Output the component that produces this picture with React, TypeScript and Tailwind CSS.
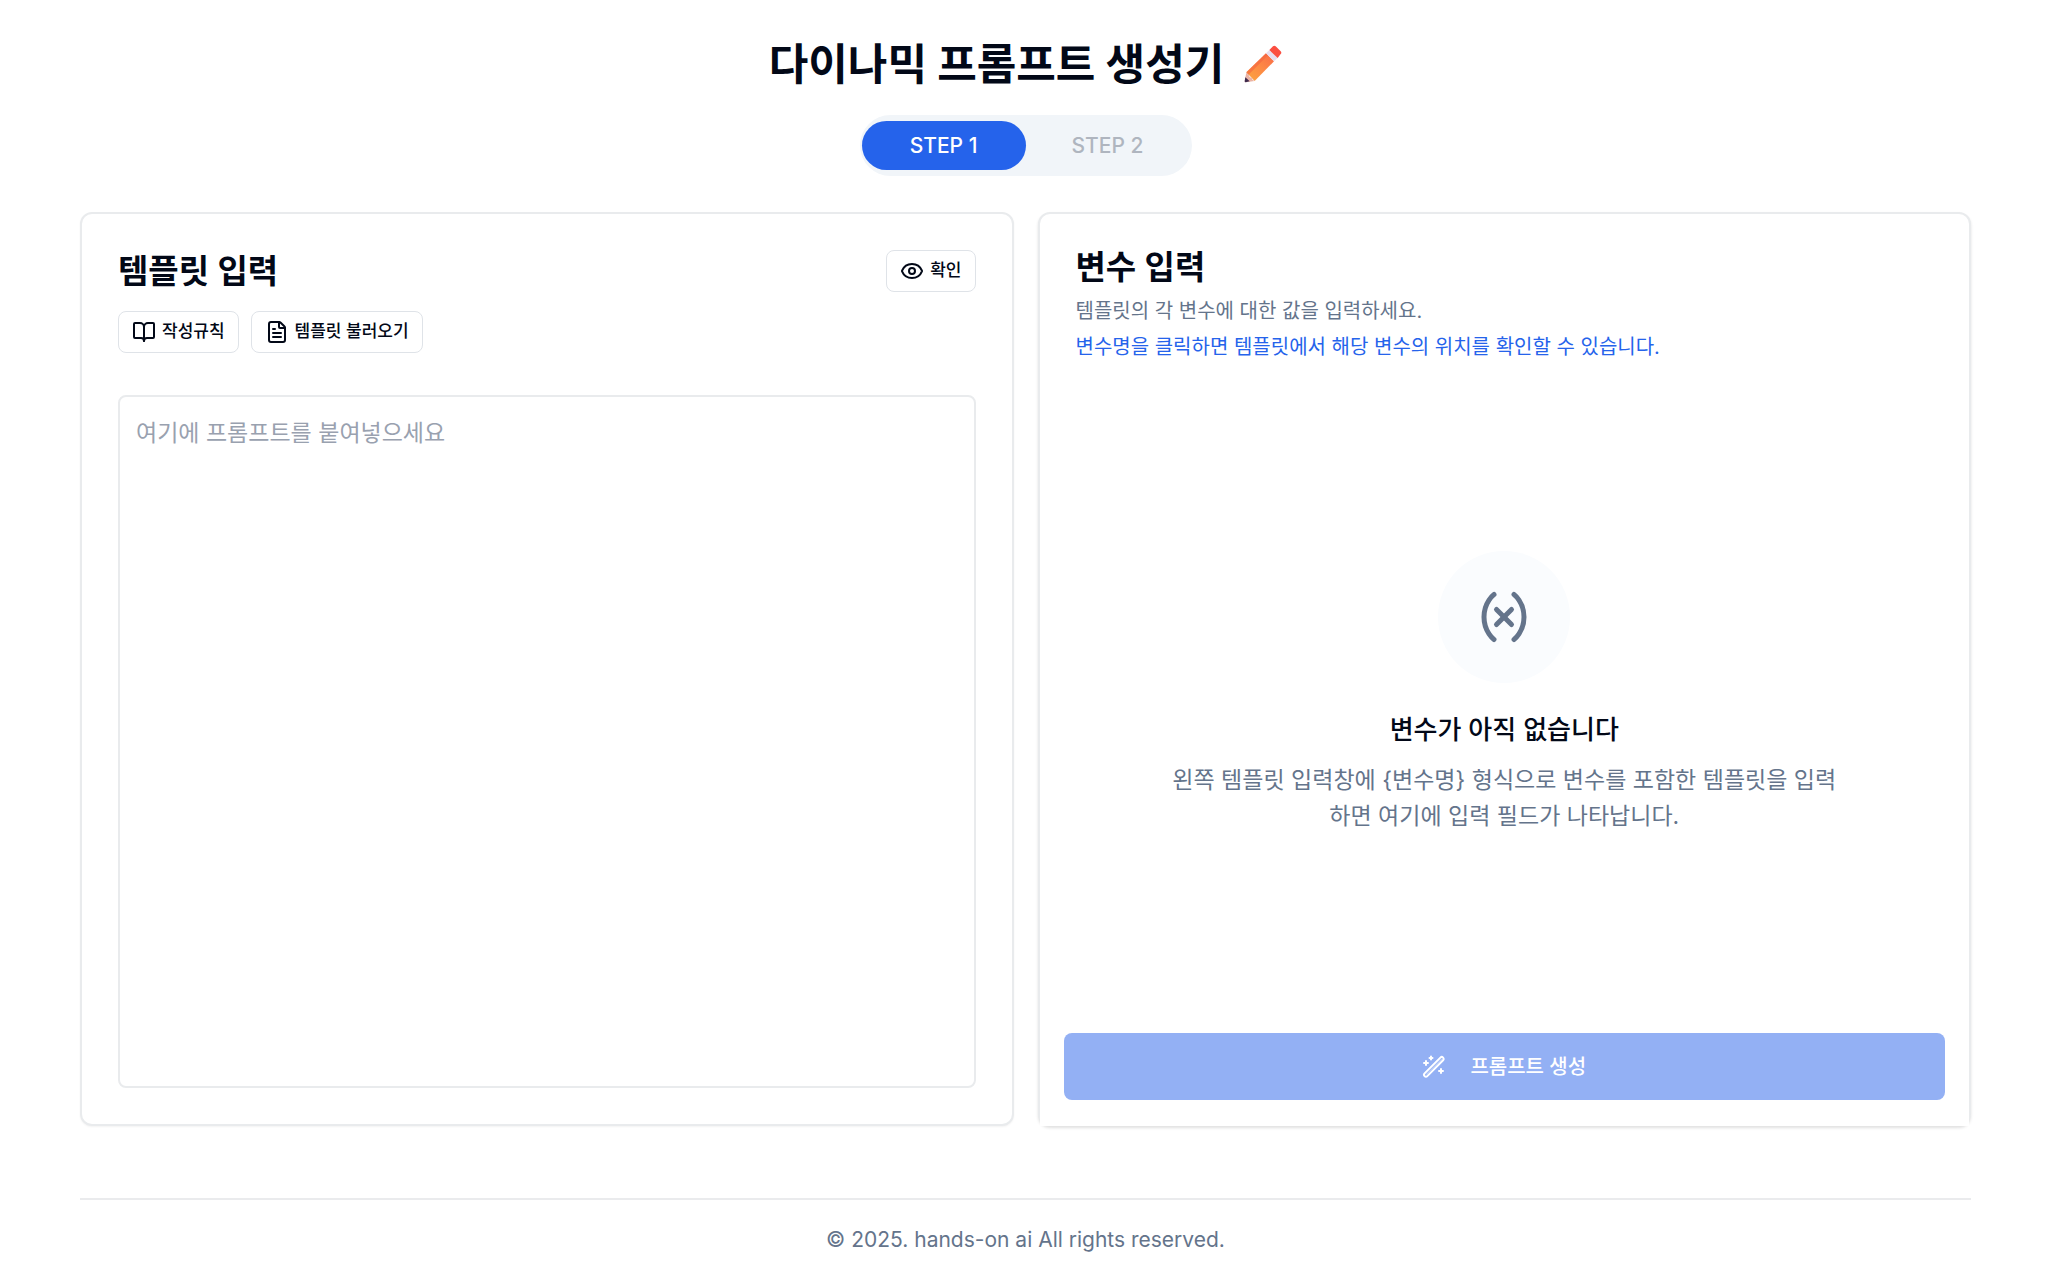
import { useState } from "react";
import type { ReactNode } from "react";
import { BookOpen, Eye, FileText, Variable } from "lucide-react";
import { clsx } from "clsx";

const STEPS = ["STEP 1", "STEP 2"];

const EMPTY_HINT =
  "왼쪽 템플릿 입력창에 {변수명} 형식으로 변수를 포함한 템플릿을 입력하면 여기에 입력 필드가 나타납니다.";

function PencilIcon() {
  return (
    <svg viewBox="0 0 114 114" className="size-[38px] shrink-0" aria-hidden="true">
      <defs>
        <linearGradient id="pencil-body" x1="0" y1="1" x2="1" y2="0">
          <stop offset="0" stopColor="#fba63f" />
          <stop offset="0.5" stopColor="#fd8a45" />
          <stop offset="1" stopColor="#f96b48" />
        </linearGradient>
      </defs>
      <path d="M7 82 66 25l24 24-58 59z" fill="url(#pencil-body)" />
      <path d="M7 82 66 25l6 6-60 60z" fill="#f4643f" opacity="0.6" />
      <path d="M7 82q1 7 7 8 2 8 9 9 2 8 9 9L5 112q-3 0-3-3z" fill="#eab3a4" />
      <path d="m4 97 13 12-12 3q-3 0-3-3z" fill="#3f2b4e" />
      <path d="m66 25 10-10 25 24-11 10z" fill="#e6deef" />
      <path d="M76 15 87 4q4-4 8 0l15 15q4 4 0 8l-9 12z" fill="#fb4f41" />
    </svg>
  );
}

function WandIcon() {
  return (
    <svg
      viewBox="0 0 24 24"
      className="size-6"
      fill="none"
      stroke="currentColor"
      strokeWidth="2"
      strokeLinecap="round"
      strokeLinejoin="round"
      aria-hidden="true"
    >
      <path d="M2.600 18.400 18.400 2.600a1.800 1.800 0 0 1 2.700 2.700L5.300 21.100a1.900 1.900 0 0 1-2.700-2.700z" />
      <path d="M4.500 19.200 19.500 4.200" strokeWidth="0.500" />
      <path d="M4 6v4M2 8h4M9 1.500v3M7.500 3h3M19 14v4M17 16h4" />
    </svg>
  );
}

function OutlineButton({ icon, children }: { icon: ReactNode; children: ReactNode }) {
  return (
    <button
      type="button"
      className="flex h-[42px] items-center gap-1.5 rounded-lg border border-[#dfe3e8] bg-white px-[13px] text-[17px] font-medium"
    >
      {icon}
      {children}
    </button>
  );
}

function StepTabs() {
  const [step, setStep] = useState(0);

  return (
    <nav className="flex rounded-full bg-[#f1f5f9] px-0.5 py-1.5">
      {STEPS.map((label, i) => (
        <button
          key={label}
          type="button"
          onClick={() => setStep(i)}
          className={clsx(
            "h-[49px] w-[164px] rounded-full text-[21px] font-medium",
            i === step ? "bg-[#2563eb] text-white" : "text-[#afb5bf]"
          )}
        >
          {label}
        </button>
      ))}
    </nav>
  );
}

function TemplateCard() {
  return (
    <section className="flex flex-col rounded-xl border-2 border-[#e9ebed] bg-white p-9 shadow-xs">
      <div className="flex items-center justify-between">
        <h2 className="text-[33px] leading-[42px] font-semibold">템플릿 입력</h2>
        <OutlineButton icon={<Eye className="size-6" />}>확인</OutlineButton>
      </div>
      <div className="mt-[19px] flex gap-3">
        <OutlineButton icon={<BookOpen className="size-6" />}>작성규칙</OutlineButton>
        <OutlineButton icon={<FileText className="size-6" />}>템플릿 불러오기</OutlineButton>
      </div>
      <textarea
        aria-label="템플릿"
        placeholder="여기에 프롬프트를 붙여넣으세요"
        className="mt-[42px] min-h-[693px] w-full grow resize-none rounded-lg border-2 border-[#e9ebed] px-4 py-[18px] text-[23px] leading-9 placeholder:text-gray-400"
      />
    </section>
  );
}

function VariableCard() {
  return (
    <section className="flex flex-col rounded-xl border-2 border-[#e9ebed] bg-white shadow-[0_2px_3px_rgb(0_0_0/0.12)]">
      <div className="px-9 pt-8">
        <h2 className="text-[33px] leading-[42px] font-semibold">변수 입력</h2>
        <p className="mt-[5px] text-[20px] leading-9 text-[#64748b]">
          템플릿의 각 변수에 대한 값을 입력하세요.
        </p>
        <p className="text-[20px] leading-9 text-[#2563eb]">
          변수명을 클릭하면 템플릿에서 해당 변수의 위치를 확인할 수 있습니다.
        </p>
      </div>

      <div className="flex grow flex-col items-center justify-center px-6 pb-3.5 text-center">
        <div className="flex size-[132px] items-center justify-center rounded-full bg-[#fafcfe]">
          <Variable className="size-[60px] text-[#64748b]" />
        </div>
        <h3 className="mt-[27px] text-[26px] leading-10 font-medium">변수가 아직 없습니다</h3>
        <p className="mt-3 max-w-[676px] text-[23px] leading-9 break-all text-[#64748b]">
          {EMPTY_HINT}
        </p>
      </div>

      {/* sits over the card's bottom border */}
      <div className="relative -mb-0.5 bg-white px-6 pb-[26px]">
        <button
          type="button"
          disabled
          className="flex h-[67px] w-full items-center justify-center gap-6 rounded-lg bg-[#93b0f4] text-[20px] font-medium text-white"
        >
          <WandIcon />
          프롬프트 생성
        </button>
      </div>
    </section>
  );
}

export default function App() {
  return (
    <div className="min-h-screen bg-white pr-[77px] pl-20 font-['Inter','Noto_Sans_CJK_KR',sans-serif] text-[#020817]">
      <header className="flex flex-col items-center pt-8">
        <h1 className="flex items-center gap-5 text-[43px] leading-[64px] font-bold">
          다이나믹 프롬프트 생성기
          <PencilIcon />
        </h1>
        <div className="mt-[19px]">
          <StepTabs />
        </div>
      </header>

      <main className="mt-9 grid grid-cols-2 gap-6">
        <TemplateCard />
        <VariableCard />
      </main>

      <footer className="mt-[72px] border-t-2 border-[#eaebed] pt-6 text-center text-[21px] leading-8 text-[#64748b]">
        © 2025. hands-on ai All rights reserved.
      </footer>
    </div>
  );
}
